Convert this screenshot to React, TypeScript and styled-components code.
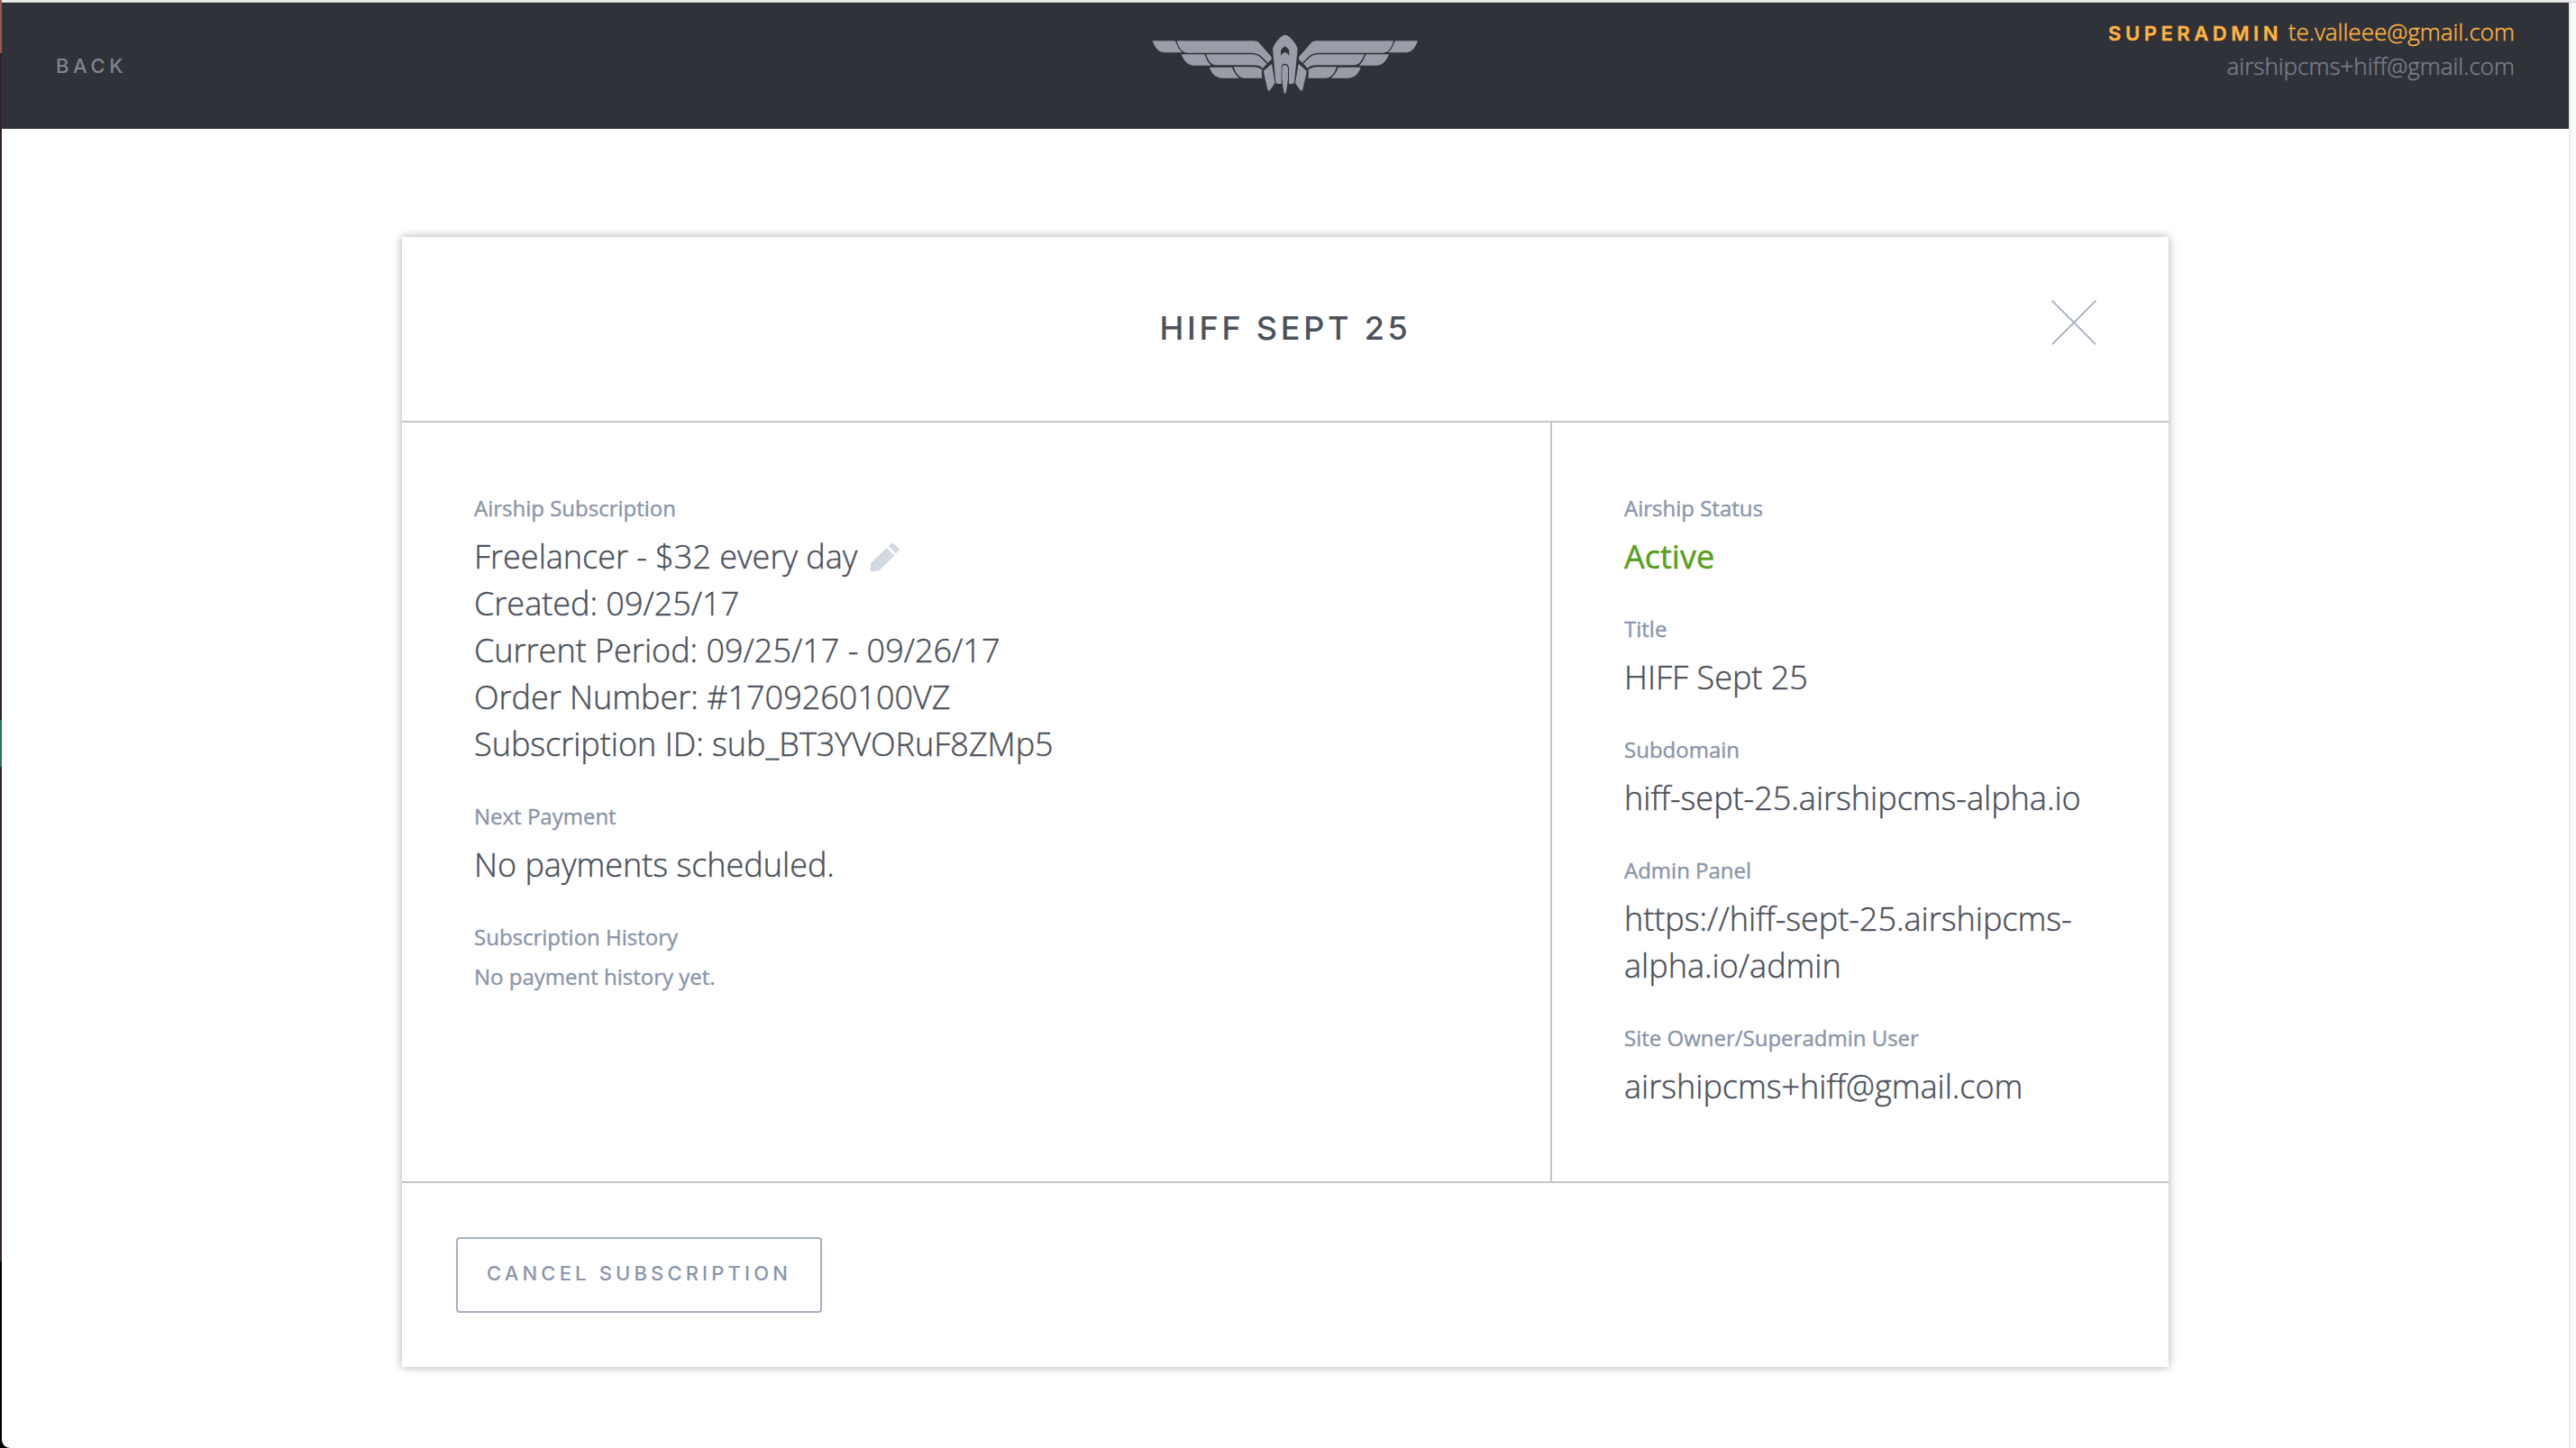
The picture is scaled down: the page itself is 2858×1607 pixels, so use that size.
import React from 'react';
import styled, { createGlobalStyle } from 'styled-components';

const Global = createGlobalStyle`
  * { box-sizing: border-box; }
  html, body { margin: 0; padding: 0; }
  body { background: #fff; font-family: 'Open Sans', 'Noto Sans', sans-serif; overflow: hidden; }
`;

const Screen = styled.div`
  display: grid;
  grid-template-columns: 2px 2848px 8px;
  width: 2858px;
  height: 1607px;
  background: #000;
`;

const Desktop = styled.div`
  background: linear-gradient(#98594d 0 59px, #33222f 59px 799px, #2c6e60 799px 851px, #33222f 851px 1400px, #000 1400px);
`;

const Page = styled.div`
  display: flex;
  flex-direction: column;
  align-items: center;
  background: #fff;
  border-bottom-left-radius: 9px;
  overflow: hidden;
`;

const Toolbar = styled.div`
  width: 100%;
  height: 3px;
  background: #ececec;
  border-bottom: 1px solid #c9c9c9;
`;

const Gutter = styled.div`
  display: flex;
  flex-direction: column;
  background: #fafafa;
`;

const Track = styled.div`
  flex: 1;
  border-left: 2px solid #e8e8e8;
`;

const Header = styled.header`
  display: grid;
  grid-template-columns: 1fr 300px 1fr;
  width: 100%;
  height: 140px;
  padding: 0 60px;
  background: #30323a;
`;

const Caps = styled.span<{ $size: number; $spacing: number; $weight: number; $color: string }>`
  font-family: Inter, 'Liberation Sans', sans-serif;
  font-size: ${p => p.$size}px;
  font-weight: ${p => p.$weight};
  letter-spacing: ${p => p.$spacing}px;
  color: ${p => p.$color};
  white-space: nowrap;
`;

const Back = styled.div`
  padding-top: 54px;
  line-height: 32px;
`;

const LogoBox = styled.div`
  display: flex;
  justify-content: center;
  padding-top: 35px;
`;

const Accounts = styled.div`
  display: flex;
  flex-direction: column;
  align-items: flex-end;
  padding-top: 13px;
`;

const Account = styled.div<{ $color: string }>`
  height: 38px;
  line-height: 38px;
  font-size: 26px;
  font-weight: 300;
  color: ${p => p.$color};
  -webkit-text-stroke: 0.4px ${p => p.$color};
  white-space: nowrap;
`;

const Card = styled.main`
  display: flex;
  flex-direction: column;
  width: 1960px;
  height: 1254px;
  margin-top: 120px;
  background: #fff;
  box-shadow: 0 0 10px rgba(0, 0, 0, 0.32);
`;

const CardHead = styled.div`
  display: grid;
  grid-template-columns: 1fr auto 1fr;
  height: 206px;
  padding: 0 80px;
  border-bottom: 2px solid #c4c4cc;
`;

const Title = styled.h1`
  grid-column: 2;
  margin: 0;
  padding-top: 76px;
  line-height: 50px;
  font-weight: 500;
`;

const CloseBox = styled.div`
  justify-self: end;
  padding-top: 69px;
  margin-right: -1px;
`;

const CardBody = styled.div`
  display: grid;
  grid-template-columns: 1274px 1fr;
  flex: 1;
`;

const Column = styled.section<{ $divided?: boolean }>`
  display: flex;
  flex-direction: column;
  gap: 32px;
  padding: 73px 80px 0;
  border-left: ${p => (p.$divided ? '2px solid #c4c4cc' : '0')};
`;

const Label = styled.div`
  margin-bottom: 6px;
  line-height: 44px;
  font-size: 24px;
  color: #8b96a9;
  -webkit-text-stroke: 0.4px #8b96a9;
`;

const Note = styled(Label)`
  margin: -6px 0 0;
`;

const Value = styled.div<{ $active?: boolean }>`
  display: flex;
  align-items: center;
  min-height: 52px;
  line-height: 52px;
  font-size: 36px;
  font-weight: ${p => (p.$active ? 400 : 300)};
  color: ${p => (p.$active ? '#58a01c' : '#4d525b')};
  -webkit-text-stroke: 0.45px ${p => (p.$active ? '#58a01c' : '#4d525b')};
`;

const CardFoot = styled.div`
  height: 206px;
  padding: 60px;
  border-top: 2px solid #c4c4cc;
`;

const Button = styled.button`
  display: flex;
  justify-content: center;
  width: 406px;
  height: 84px;
  padding: 22px 0 0;
  line-height: 32px;
  border: 2px solid #a7b1c1;
  border-radius: 4px;
  background: #fff;
`;

const PencilIcon = styled.svg`
  margin-left: 14px;
`;

const Wing = () => (
  <g>
    <path d="M57 76H130Q134 76 136 83Q142 102 156 115H104Q86 115 76 107Q64 97 57 76Z" />
    <path d="M138 76H393Q407 76 415 86L453 130V138L441 149L421 129Q407 117 391 116H174Q162 116 153 107Q143 97 138 76Z" />
    <path d="M153 121H228Q230 121 232 126Q238 144 252 158H194Q181 158 172 150Q160 140 153 121Z" />
    <path d="M235 121H392Q406 122 415 130L438 152L424 167Q412 157 395 157H271Q258 157 249 147Q240 138 235 121Z" />
    <path d="M247 164H322Q328 184 346 200H289Q275 200 266 193Q253 183 247 164Z" />
    <path d="M327 163H393Q409 163 422 172Q419 181 422 200H363Q351 200 343 191Q332 181 327 163Z" />
    <path d="M427 176L453 153Q455 153 455 158L465 217L448 240Q443 246 440 238L428 185Z" />
  </g>
);

const Logo = () => (
  <svg width="296" height="68" viewBox="55 54 888 204" fill="#989da7">
    <Wing />
    <g transform="translate(997 0) scale(-1 1)">
      <Wing />
    </g>
    <path
      fillRule="evenodd"
      d="M498 56Q504 56 510 61Q531 78 540 102L529 213Q528 219 522 219H511V165Q509 152 498 152Q487 152 486 165V219H474Q468 219 467 213L457 102Q466 78 487 61Q493 56 498 56ZM484 126Q488 116 498 114Q508 116 512 126V110Q509 100 498 94Q487 100 484 110Z"
    />
    <path d="M498 156Q508 157 508 170V200Q506 228 501 249Q498 254 495 249Q490 228 488 200V170Q488 157 498 156Z" />
  </svg>
);

const Close = () => (
  <svg width="52" height="52" viewBox="0 0 52 52" fill="none" stroke="#b0b9c8" strokeWidth="2">
    <path d="M1.5 1.5L50 50M50.5 1.5L2 50" />
  </svg>
);

const Pencil = () => (
  <PencilIcon width="34" height="34" viewBox="0 0 34 34" fill="#d3d9e1">
    <path d="M0.8 24.6L18.5 7L27.3 15.4L10.3 32.4L0.8 33.2Z" />
    <path d="M20.8 5.2L24.4 1.7Q25.2 1 26 1.7L32.6 7.9Q33.3 8.6 32.6 9.4L29 13.2Z" />
  </PencilIcon>
);

interface FieldProps {
  label: string;
  lines: string[];
  active?: boolean;
}

const Field = ({ label, lines, active }: FieldProps) => (
  <div>
    <Label>{label}</Label>
    {lines.map(line => (
      <Value key={line} $active={active}>{line}</Value>
    ))}
  </div>
);

export default function App() {
  return (
    <>
      <Global />
      <Screen>
        <Desktop />
        <Page>
          <Toolbar />
          <Header>
            <Back>
              <Caps $size={22} $spacing={4.6} $weight={500} $color="#81838f">BACK</Caps>
            </Back>
            <LogoBox><Logo /></LogoBox>
            <Accounts>
              <Account $color="#ffb440">
                <Caps $size={22} $spacing={4.55} $weight={600} $color="#ffb440">SUPERADMIN</Caps> te.valleee@gmail.com
              </Account>
              <Account $color="#7c7e8b">airshipcms+hiff@gmail.com</Account>
            </Accounts>
          </Header>
          <Card>
            <CardHead>
              <Title>
                <Caps $size={36} $spacing={3.75} $weight={500} $color="#4d525b">HIFF SEPT 25</Caps>
              </Title>
              <CloseBox><Close /></CloseBox>
            </CardHead>
            <CardBody>
              <Column>
                <div>
                  <Label>Airship Subscription</Label>
                  <Value>Freelancer - $32 every day <Pencil /></Value>
                  <Value>Created: 09/25/17</Value>
                  <Value>Current Period: 09/25/17 - 09/26/17</Value>
                  <Value>Order Number: #1709260100VZ</Value>
                  <Value>Subscription ID: sub_BT3YVORuF8ZMp5</Value>
                </div>
                <Field label="Next Payment" lines={['No payments scheduled.']} />
                <div>
                  <Label>Subscription History</Label>
                  <Note>No payment history yet.</Note>
                </div>
              </Column>
              <Column $divided>
                <Field label="Airship Status" lines={['Active']} active />
                <Field label="Title" lines={['HIFF Sept 25']} />
                <Field label="Subdomain" lines={['hiff-sept-25.airshipcms-alpha.io']} />
                <Field label="Admin Panel" lines={['https://hiff-sept-25.airshipcms-', 'alpha.io/admin']} />
                <Field label="Site Owner/Superadmin User" lines={['airshipcms+hiff@gmail.com']} />
              </Column>
            </CardBody>
            <CardFoot>
              <Button>
                <Caps $size={22} $spacing={4.15} $weight={500} $color="#8b96a9">CANCEL SUBSCRIPTION</Caps>
              </Button>
            </CardFoot>
          </Card>
        </Page>
        <Gutter>
          <Toolbar />
          <Track />
        </Gutter>
      </Screen>
    </>
  );
}
